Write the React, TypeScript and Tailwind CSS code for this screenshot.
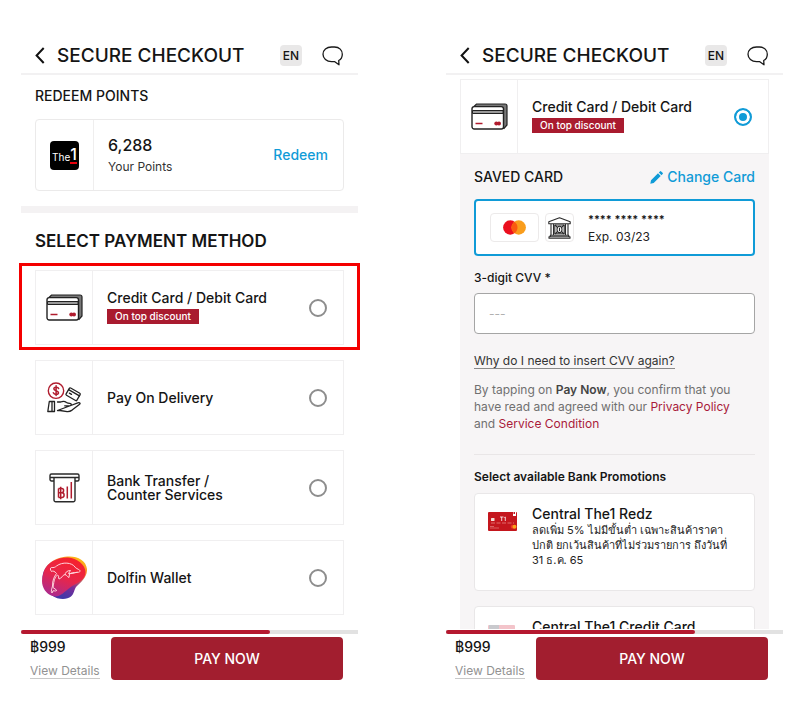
import type { ReactNode } from 'react';

function BackIcon() {
  return (
    <svg width="10" height="17" viewBox="0 0 10 17" fill="none" stroke="#111" strokeWidth="2" aria-hidden="true">
      <path d="M8.700 1 1.600 8.500l7.100 7.500" />
    </svg>
  );
}

function ChatIcon() {
  return (
    <svg width="22" height="20" viewBox="0 0 22 20" fill="none" stroke="#1a1a1a" strokeWidth="1.300" strokeLinejoin="round" aria-hidden="true">
      <path d="M9.500 1h3C17.400 1 20.300 4.200 20.300 8.200c0 2.900-1.300 5.100-3.600 6.300l.3 4.300-4.200-3.100H9.500C4.600 15.700 1 12.300 1 8.200S4.600 1 9.500 1Z" />
    </svg>
  );
}

function CardsIcon() {
  return (
    <svg width="37" height="27" viewBox="0 0 37 27" fill="none" aria-hidden="true">
      <path d="M3 3.500 5.500 1H34a2 2 0 0 1 2 2v19l-3 3.500z" fill="#777" stroke="#222" strokeWidth="1.200" />
      <rect x="1" y="3.600" width="31.500" height="22.400" rx="2.200" fill="#fff" stroke="#222" strokeWidth="1.400" />
      <path d="M1.500 7.500h30.500v3H1.500z" fill="#999" stroke="#222" strokeWidth="1" />
      <path d="M4.500 20.500h7" stroke="#b01c2e" strokeWidth="1.500" />
      <circle cx="25.300" cy="20.500" r="2" fill="#b01c2e" />
      <circle cx="28" cy="20.500" r="2" fill="#b01c2e" />
    </svg>
  );
}

function DeliveryIcon() {
  return (
    <svg width="35" height="31" viewBox="0 0 35 31" fill="none" stroke="#222" strokeWidth="1.300" strokeLinejoin="round" strokeLinecap="round" aria-hidden="true">
      <circle cx="9" cy="8.700" r="7.700" stroke="#b01c2e" strokeWidth="1.400" />
      <path d="M11.700 6.600C11.200 5 7 4.500 6.800 6.800c-.1 2.300 4.800 1.500 4.700 4-.1 2.300-4.400 2-5.200 0M9.100 3.800v9.800" stroke="#b01c2e" strokeWidth="1.500" />
      <g transform="rotate(30 26 12)">
        <rect x="20" y="8" width="12.500" height="8.400" rx="1" />
        <path d="M20 10.400h12.500M22.400 13h2.500" />
      </g>
      <path d="M2.300 19.500h5.200v10H.8zM5 19.500v10" />
      <path d="M10.500 20h3.200c2-1 4.200-.8 5.800.5 1 .7 1.800.9 3.300.9 2 0 2 2.200.1 2.400h-5.200M23.800 23.500l7-2.600c2.200-.7 3 .6 1.500 1.700l-7.200 5.500c-1.700 1.200-3.200 1.700-5 1.500l-7-1.100h-2.600z" />
    </svg>
  );
}

function BankTransferIcon() {
  return (
    <svg width="31" height="30" viewBox="0 0 31 30" fill="none" stroke="#2a2a2a" strokeWidth="1.400" aria-hidden="true">
      <path d="M5 8H2.500A1.500 1.500 0 0 1 1 6.500v-4A1.500 1.500 0 0 1 2.500 1h26A1.500 1.500 0 0 1 30 2.500v4A1.500 1.500 0 0 1 28.500 8H26M1.500 4.500h28" />
      <path d="M5 4.500V27a1.700 1.700 0 0 0 1.700 1.700h17.600A1.700 1.700 0 0 0 26 27V4.500" />
      <g stroke="#b01c2e" strokeWidth="1.500">
        <path d="M9.500 15.500v9M9.500 15.500h3.300c2.400 0 2.400 4.200 0 4.200H9.500h3.500c2.800 0 2.800 4.800 0 4.800H9.500M11.700 13.800v12.400" />
        <path d="M18.300 13.500v12M22.300 9v16.500" />
      </g>
    </svg>
  );
}

function DolfinIcon() {
  return (
    <svg width="46" height="44" viewBox="0 0 46 44" fill="none" aria-hidden="true">
      <defs>
        <linearGradient id="dolfin-back" x1="42" y1="4" x2="24" y2="42" gradientUnits="userSpaceOnUse">
          <stop stopColor="#fdb913" />
          <stop offset=".3" stopColor="#f6803a" />
          <stop offset=".7" stopColor="#7a2d98" />
          <stop offset="1" stopColor="#4237a8" />
        </linearGradient>
        <linearGradient id="dolfin-front" x1="28" y1="3" x2="12" y2="42" gradientUnits="userSpaceOnUse">
          <stop stopColor="#f5222f" />
          <stop offset=".45" stopColor="#e8264a" />
          <stop offset="1" stopColor="#a82b92" />
        </linearGradient>
      </defs>
      <path d="M24 .8C34-1 45 3 46 13c.5 8-6 13-11 18-2 3-2 7-5 9.500-4 3.500-13 3.500-19-1C5 34 1 28 1.500 20 3 9 13 2 24 .8Z" fill="url(#dolfin-back)" />
      <path d="M2 19C4 7 16 1.300 27 1.500c9 .5 17.500 7.500 17.500 14.500 0 9-9 10.500-16 16-6 4.500-10 10-17 8C3 37-1 28 2 19Z" fill="url(#dolfin-front)" />
      <path d="M10.500 15.500c-1.500-2-1.500-3.500 0-4 2 .2 3.500 0 5-1.500 6-4.500 15.500-3.500 18.500 1 .5 1.200 3 2 4.500 3 1.500 1.500 0 2.300-2.500 2.500-3.500 0-5.500 0-7.500 1.500l-.5 3.500c-2.500-1-2.500-3.500-4.500-3-2 .8-3 4-5.500 4.500-1-1 .5-3.500-1.500-4-4 3.500-3.500 8-4.500 12.500l3.500 2.500c.5 1.500-2 .8-3.500.8l-1 2.200c-1.500-1.500 0-4.500.5-7 0-6 1.500-9 4-12.500-1.800-2.200-3.500-3-5-2ZM24 19.500c0-3 2-5 5.500-5l-2 3c3 .5 6-.5 9-1.500" stroke="#ffd5dc" strokeWidth="1" strokeLinejoin="round" />
    </svg>
  );
}

function PencilIcon() {
  return (
    <svg width="13" height="13" viewBox="0 0 13 13" fill="#109bd7" aria-hidden="true">
      <path d="M.3 12.700 1 9.300 8 2.300l2.700 2.700-7 7zM8.800 1.500 9.900.4a.9.900 0 0 1 1.300 0l1.400 1.400a.9.900 0 0 1 0 1.300l-1.100 1.100z" />
    </svg>
  );
}

function BankIcon() {
  return (
    <svg width="23" height="22" viewBox="0 0 23 22" fill="none" stroke="#2b2b2b" strokeWidth="1.100" strokeLinejoin="round" aria-hidden="true">
      <path d="M.8 6.700v-2L11.500.7l10.700 4v2zM3 6.700v11.500M5.500 6.700v11.500M17.500 6.700v11.500M20 6.700v11.500M2.300 18.200h18.400v1.500H2.300zM1 19.700h21v1.600H1z" />
      <rect x="6.800" y="8" width="9.400" height="8.800" />
      <path d="m7 8 9 9M16 8l-9 9" />
      <ellipse cx="11.500" cy="12.400" rx="2.500" ry="3.200" fill="#fff" />
      <path d="M11.500 10.700v3.400" />
    </svg>
  );
}

function MastercardIcon() {
  return (
    <svg width="23" height="15" viewBox="0 0 23 15" aria-hidden="true">
      <circle cx="7.300" cy="7.500" r="7.200" fill="#eb0f1e" />
      <circle cx="15.700" cy="7.500" r="7.200" fill="#f99d1c" />
      <path d="M11.500 1.650a7.200 7.200 0 0 1 0 11.700 7.200 7.200 0 0 1 0-11.700Z" fill="#fa5a10" />
    </svg>
  );
}

function The1Logo() {
  return (
    <div className="flex size-[29px] items-center justify-center rounded-sm bg-black text-white">
      <span className="pt-1 text-[10px] leading-none">The</span>
      <span className="border-b-2 border-red-600 text-base font-medium leading-4">1</span>
    </div>
  );
}

function RedzCard() {
  return (
    <svg width="30" height="19" viewBox="0 0 30 19" fill="none" aria-hidden="true">
      <rect width="29" height="19" rx="1" fill="#c4161d" />
      <path d="M25 0h3v4h-3z" fill="#fff" />
      <path d="M25.500 0h1.500v2h-1.500z" fill="#c4161d" />
      <rect x="3" y="6" width="3.500" height="3" rx=".5" fill="#f2ddd6" />
      <path d="M12 5h3.500M13.700 5v4M16.300 5.500 17.300 5v4" stroke="#fff" strokeWidth=".8" />
      <path d="M3 11h23" stroke="#e06a6a" strokeWidth="1" strokeDasharray="4 1.500" />
      <path d="M2 14.500h4M2 16h9" stroke="#e58080" strokeWidth=".7" />
      <circle cx="24.800" cy="14.800" r="2" fill="#ef3a20" />
      <circle cx="26.500" cy="14.800" r="2" fill="#f9a01c" />
    </svg>
  );
}

function CreditCardArt() {
  return (
    <svg width="27" height="17" viewBox="0 0 27 17" aria-hidden="true">
      <rect width="27" height="17" rx="1" fill="#f3c4ca" />
      <path d="M1 0h10v17H1z" fill="#c9c9cd" />
    </svg>
  );
}

function Header() {
  return (
    <header className="flex h-[39px] shrink-0 items-center border-b-2 border-[#f2f1f2] px-3.5 pt-0.5">
      <button type="button" aria-label="Back" className="mr-3">
        <BackIcon />
      </button>
      <h1 className="flex-1 whitespace-nowrap text-[19px] font-medium leading-6">SECURE CHECKOUT</h1>
      <button type="button" className="mr-5 h-[21px] w-[22px] rounded-sm bg-[#e9e8e8] text-center text-xs font-medium">
        EN
      </button>
      <button type="button" aria-label="Chat">
        <ChatIcon />
      </button>
    </header>
  );
}

function Footer({ label }: { label: string }) {
  return (
    <footer className="shrink-0 pt-px">
      <div role="progressbar" aria-label={label} aria-valuenow={74} className="h-1 bg-[#e2e2e2]">
        <div className="h-1 w-[74%] rounded-full bg-[#b5182f]" />
      </div>
      <div className="flex pb-[25px] pl-[9px] pr-[15px] pt-[3px]">
        <div className="w-[81px] shrink-0 whitespace-nowrap">
          <p className="text-sm font-medium leading-5">฿999</p>
          <a href="#details" className="mt-1 inline-block border-b border-[#c9c9c9] text-xs leading-[15px] text-[#929292]">
            View Details
          </a>
        </div>
        <button type="button" className="h-[43px] flex-1 rounded-sm bg-[#a21e2f] text-sm font-medium text-white">
          PAY NOW
        </button>
      </div>
    </footer>
  );
}

type MethodProps = {
  id: string;
  group: string;
  icon: ReactNode;
  title: ReactNode;
  badge?: string;
  checked?: boolean;
};

function Method({ id, group, icon, title, badge, checked }: MethodProps) {
  return (
    <label htmlFor={id} className="flex h-[75px] items-center border border-[#f0eff0] bg-white pr-4">
      <span className="flex w-[57px] shrink-0 items-center justify-center self-stretch border-r border-[#f0eff0]">
        {icon}
      </span>
      <span className="flex flex-1 flex-col items-start gap-1 pl-3.5">
        <span className="whitespace-nowrap text-sm font-medium leading-[14px]">{title}</span>
        {badge && (
          <span className="h-[15px] w-[92px] whitespace-nowrap bg-[#a91b2f] text-center text-[10px] font-medium leading-[14px] text-white">
            {badge}
          </span>
        )}
      </span>
      <input
        id={id}
        type="radio"
        name={group}
        defaultChecked={checked}
        className="size-[18px] shrink-0 appearance-none rounded-full border-2 border-[#8d8d8d] bg-white checked:border-[#109bd7] checked:bg-[#109bd7] checked:shadow-[inset_0_0_0_3px_white]"
      />
    </label>
  );
}

function SelectScreen() {
  return (
    <section className="flex min-h-0 min-w-0 flex-col">
      <Header />
      <main className="min-h-0 flex-1 overflow-y-clip">
        <div className="px-3.5 pb-[15px] pt-[11px]">
          <h2 className="text-sm font-medium leading-5">REDEEM POINTS</h2>
          <div className="mt-[13px] flex h-[72px] items-center rounded-sm border border-[#ebeaea] pr-[15px]">
            <div className="flex w-[58px] shrink-0 items-center justify-center self-stretch border-r border-[#efeeee]">
              <The1Logo />
            </div>
            <div className="flex-1 pl-3.5">
              <p className="text-base font-medium leading-6">6,288</p>
              <p className="text-xs leading-5 text-[#333]">Your Points</p>
            </div>
            <button type="button" className="text-sm font-medium text-[#109bd7]">
              Redeem
            </button>
          </div>
        </div>
        <div className="h-[7px] bg-[#f4f2f3]" />
        <div className="px-3.5 pt-[18px]">
          <h2 className="whitespace-nowrap text-[17px] font-semibold leading-5">SELECT PAYMENT METHOD</h2>
          <div className="mt-[19px] flex flex-col gap-[15px]">
            <div className="relative">
              <Method id="card" group="method" icon={<CardsIcon />} title="Credit Card / Debit Card" badge="On top discount" />
              <div className="pointer-events-none absolute -inset-x-4 -bottom-[5px] -top-[7px] border-[3px] border-[#f40000]" />
            </div>
            <Method id="delivery" group="method" icon={<DeliveryIcon />} title="Pay On Delivery" />
            <Method
              id="transfer"
              group="method"
              icon={<BankTransferIcon />}
              title={
                <>
                  Bank Transfer /<br />
                  Counter Services
                </>
              }
            />
            <Method id="dolfin" group="method" icon={<DolfinIcon />} title="Dolfin Wallet" />
          </div>
        </div>
      </main>
      <Footer label="Payment method progress" />
    </section>
  );
}

function Promo({ art, title, children }: { art: ReactNode; title: string; children?: ReactNode }) {
  return (
    <article className="flex min-h-[98px] gap-[14px] rounded-sm border border-[#e9e7e8] bg-white pl-[13px] pr-4 pt-2.5">
      <div className="w-[30px] shrink-0 pt-2">{art}</div>
      <div className="min-w-0">
        <h4 className="whitespace-nowrap text-sm font-medium leading-[19px]">{title}</h4>
        <p className="whitespace-nowrap text-[11px] leading-[15px] text-[#222]">{children}</p>
      </div>
    </article>
  );
}

function SavedCardScreen() {
  return (
    <section className="flex min-h-0 min-w-0 flex-col">
      <Header />
      <main className="min-h-0 flex-1 overflow-y-clip px-3.5 pt-1">
        <Method id="saved-method" group="saved" icon={<CardsIcon />} title="Credit Card / Debit Card" badge="On top discount" checked />
        <div className="bg-[#f7f5f6] px-3.5 pb-6 pt-[13px]">
          <div className="flex items-center justify-between">
            <h2 className="text-sm font-medium leading-5">SAVED CARD</h2>
            <button type="button" className="flex items-center gap-1 text-sm font-medium leading-5 text-[#109bd7]">
              <PencilIcon />
              Change Card
            </button>
          </div>
          <div className="mt-3 flex h-[57px] items-center rounded-sm border-2 border-[#109bd7] bg-white pl-3.5">
            <span className="mr-1.5 flex h-[29px] w-[49px] items-center justify-center rounded-sm border border-[#eceaea]">
              <MastercardIcon />
            </span>
            <span className="mr-3.5 flex size-[29px] items-center justify-center rounded-sm border border-[#eceaea]">
              <BankIcon />
            </span>
            <div className="leading-[18px]">
              <p className="text-[11px] font-semibold">**** **** ****</p>
              <p className="text-xs leading-[18px] text-[#222]">Exp. 03/23</p>
            </div>
          </div>
          <label htmlFor="cvv" className="mt-3 block text-xs font-medium leading-5">
            3-digit CVV *
          </label>
          <input
            id="cvv"
            type="text"
            placeholder="---"
            className="mt-[5px] block h-[41px] w-full rounded-sm border border-[#a5a5a5] bg-white px-3.5 text-xs placeholder:text-[#b0b0b0]"
          />
          <a href="#cvv-help" className="mt-5 inline-block border-b border-[#8a8a8a] text-xs leading-[14px] text-[#333]">
            Why do I need to insert CVV again?
          </a>
          <p className="mt-2.5 pr-3 text-xs leading-[17px] text-[#707070]">
            By tapping on <strong className="font-semibold text-[#444]">Pay Now</strong>, you confirm that you have read and agreed with our{' '}
            <a href="#privacy" className="text-[#a91b3a]">Privacy Policy</a> and{' '}
            <a href="#service" className="text-[#a91b3a]">Service Condition</a>
          </p>
          <hr className="mt-[22px] border-[#e9e6e7]" />
          <h3 className="mt-3 text-xs font-semibold leading-5">Select available Bank Promotions</h3>
          <div className="mt-1.5 flex flex-col gap-[15px]">
            <Promo art={<RedzCard />} title="Central The1 Redz">
              ลดเพิ่ม 5% ไม่มีขั้นต่ำ เฉพาะสินค้าราคา<br />
              ปกติ ยกเว้นสินค้าที่ไม่ร่วมรายการ ถึงวันที่<br />
              31 ธ.ค. 65
            </Promo>
            <Promo art={<CreditCardArt />} title="Central The1 Credit Card" />
          </div>
        </div>
      </main>
      <Footer label="Saved card progress" />
    </section>
  );
}

export default function App() {
  return (
    <div className="grid h-screen grid-cols-2 grid-rows-[minmax(0,1fr)] gap-[88px] bg-white pl-[21px] pr-[17px] pt-9 font-['Inter','Noto_Sans',sans-serif] text-[#151515]">
      <SelectScreen />
      <SavedCardScreen />
    </div>
  );
}
